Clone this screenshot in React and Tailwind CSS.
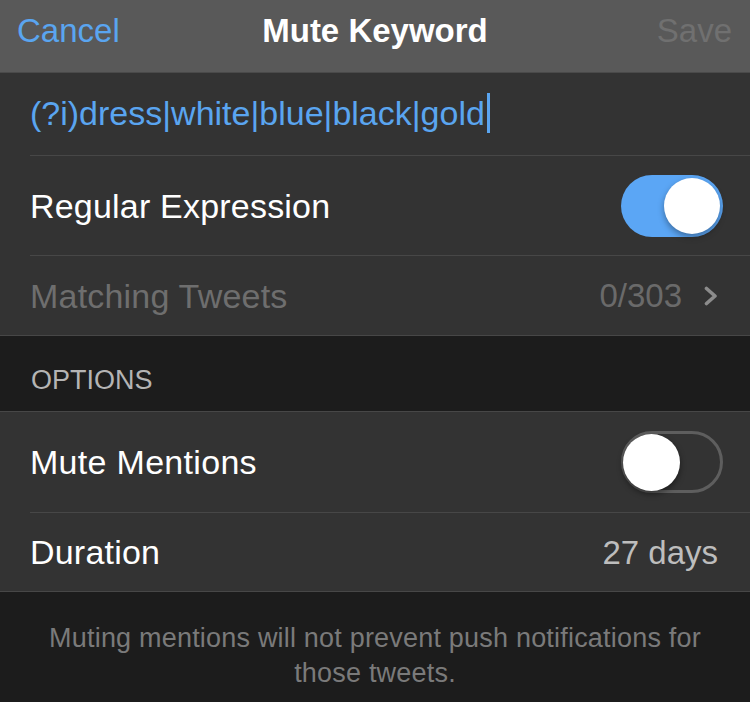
import React from "react";

function Toggle({ on }) {
  if (on) {
    return (
      <div className="flex h-[62px] w-[102px] items-center justify-end rounded-full bg-[#5ba6f5] pr-[3px]">
        <div className="h-[56px] w-[56px] rounded-full bg-white shadow-[0_3px_6px_rgba(0,0,0,0.35)]" />
      </div>
    );
  }
  return (
    <div className="flex h-[62px] w-[102px] items-center justify-start rounded-full border-[3px] border-[#5e5e5e]">
      <div className="-ml-[1px] h-[57px] w-[57px] rounded-full bg-white shadow-[0_3px_6px_rgba(0,0,0,0.45)]" />
    </div>
  );
}

export default function App() {
  return (
    <div
      className="flex h-[702px] w-[750px] flex-col bg-[#1c1c1c] text-[33px] leading-none"
      style={{ fontFamily: '"Liberation Sans", Arial, sans-serif' }}
    >
      {/* Nav bar */}
      <div className="grid h-[73px] grid-cols-[1fr_auto_1fr] items-center border-b border-[#4a4a4a] bg-[#595959] pb-[12px]">
        <div className="pl-[17px] text-[#5aa5f0]">Cancel</div>
        <div className="font-bold text-white">Mute Keyword</div>
        <div className="pr-[18px] text-right text-[#707070]">Save</div>
      </div>

      {/* Group 1 */}
      <div className="border-b border-[#474747] bg-[#333333]">
        <div className="flex h-[82px] items-center pb-[3px] pl-[30px]">
          <span className="text-[34px] text-[#5aa5f0]">(?i)dress|white|blue|black|gold</span>
          <span className="ml-[2px] inline-block h-[40px] w-[3px] bg-[#5aa5f0]" />
        </div>
        <div className="ml-[30px] h-px bg-[#474747]" />
        <div className="flex h-[99px] items-center justify-between pl-[30px] pr-[27px]">
          <span className="text-[34px] tracking-[0.2px] text-white">Regular Expression</span>
          <Toggle on />
        </div>
        <div className="ml-[30px] h-px bg-[#474747]" />
        <div className="flex h-[79px] items-center justify-between pl-[30px] pr-[32px]">
          <span className="text-[34px] tracking-[0.2px] text-[#6e6e6e]">Matching Tweets</span>
          <div className="flex items-center gap-[22px]">
            <span className="text-[#6a6a6a]">0/303</span>
            <svg width="14" height="20" viewBox="0 0 14 20" fill="none">
              <path d="M2.5 2.5 L11 10 L2.5 17.5" stroke="#8c8c8c" strokeWidth="3.6" strokeLinecap="round" strokeLinejoin="round" />
            </svg>
          </div>
        </div>
      </div>

      {/* Section header */}
      <div className="flex h-[75px] items-end pb-[17px] pl-[31px] text-[27px] text-[#b4b4b4]">
        OPTIONS
      </div>

      {/* Group 2 */}
      <div className="border-y border-[#474747] bg-[#333333]">
        <div className="flex h-[100px] items-center justify-between pl-[30px] pr-[27px]">
          <span className="text-[34px] tracking-[0.3px] text-white">Mute Mentions</span>
          <Toggle on={false} />
        </div>
        <div className="ml-[30px] h-px bg-[#474747]" />
        <div className="flex h-[78px] items-center justify-between pl-[30px] pr-[32px]">
          <span className="text-[34px] tracking-[0.2px] text-white">Duration</span>
          <span className="text-[#bdbdbd]">27 days</span>
        </div>
      </div>

      {/* Footer */}
      <div className="px-[36px] pt-[29px] text-center text-[27px] leading-[35px] tracking-[0.2px] text-[#7a7a7a]">
        Muting mentions will not prevent push notifications for those tweets.
      </div>
    </div>
  );
}
